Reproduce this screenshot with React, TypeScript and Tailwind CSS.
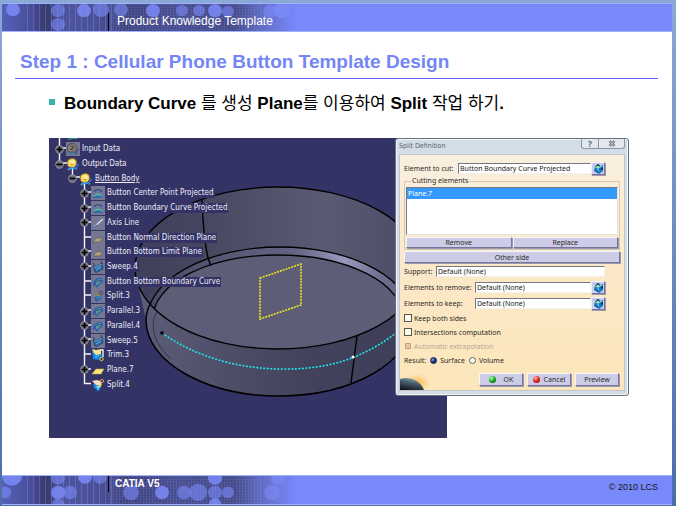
import React from 'react';
import clsx from 'clsx';

type IconKind = 'body' | 'project' | 'line' | 'plane' | 'sweep' | 'split' | 'parallel' | 'trim' | 'planeOn' | 'splitOn';

interface TreeNode {
  label: string;
  icon: IconKind;
  level: 0 | 1 | 2;
  toggle?: 'plus' | 'minus';
  hidden?: boolean;
  active?: boolean;
}

const nodes: TreeNode[] = [
  { label: 'Input Data', icon: 'body', level: 0, toggle: 'plus', hidden: true },
  { label: 'Output Data', icon: 'body', level: 0, toggle: 'minus' },
  { label: 'Button Body', icon: 'body', level: 1, toggle: 'minus', active: true },
  { label: 'Button Center Point Projected', icon: 'project', level: 2, toggle: 'plus', hidden: true },
  { label: 'Button Boundary Curve Projected', icon: 'project', level: 2, toggle: 'plus', hidden: true },
  { label: 'Axis Line', icon: 'line', level: 2, toggle: 'plus', hidden: true },
  { label: 'Button Normal Direction Plane', icon: 'plane', level: 2, hidden: true },
  { label: 'Button Bottom Limit Plane', icon: 'plane', level: 2, toggle: 'plus', hidden: true },
  { label: 'Sweep.4', icon: 'sweep', level: 2, toggle: 'plus', hidden: true },
  { label: 'Button Bottom Boundary Curve', icon: 'parallel', level: 2, hidden: true },
  { label: 'Split.3', icon: 'split', level: 2, hidden: true },
  { label: 'Parallel.3', icon: 'parallel', level: 2, toggle: 'plus', hidden: true },
  { label: 'Parallel.4', icon: 'parallel', level: 2, toggle: 'plus', hidden: true },
  { label: 'Sweep.5', icon: 'sweep', level: 2, toggle: 'plus', hidden: true },
  { label: 'Trim.3', icon: 'trim', level: 2 },
  { label: 'Plane.7', icon: 'planeOn', level: 2, toggle: 'plus' },
  { label: 'Split.4', icon: 'splitOn', level: 2 },
];

const headerDots = [
  [11, 6, 7], [56, 7, 7], [56, 22, 7], [82, 7, 7], [99, 6, 8], [119, 6, 7], [151, 7, 7], [180, 7, 6],
  [197, 7, 6], [213, 7, 7], [226, 8, 6], [268, 8, 7], [280, 7, 8],
];

const footerDots = [
  [10, 0, 10], [3, 17, 6], [56, 2, 7], [56, 17, 7], [68, 17, 7], [56, 29, 6], [83, 1, 7], [98, 1, 7],
  [129, 17, 8], [160, 17, 7], [182, 17, 7], [196, 17, 9], [213, 2, 7], [213, 17, 7], [226, 17, 6], [213, 29, 6],
  [276, 2, 7], [270, 17, 8],
];

const Pattern = ({ id, dots }: { id: string; dots: number[][] }) => (
  <svg className="absolute inset-y-0 left-0 h-full w-[310px]" viewBox="0 0 310 29" preserveAspectRatio="none" aria-hidden="true">
    <defs>
      <linearGradient id={`${id}-fade`}>
        <stop offset="0" stopColor="#5560b8" />
        <stop offset="0.1" stopColor="#474c94" />
        <stop offset="0.14" stopColor="#363968" />
        <stop offset="0.2" stopColor="#4d549c" />
        <stop offset="0.3" stopColor="#4b5196" />
        <stop offset="0.4" stopColor="#3c4076" />
        <stop offset="0.56" stopColor="#454a88" />
        <stop offset="0.75" stopColor="#424780" />
        <stop offset="0.85" stopColor="#6470ca" />
        <stop offset="0.95" stopColor="#7889fb" />
      </linearGradient>
      <pattern id={`${id}-grid`} width="3" height="3" patternUnits="userSpaceOnUse">
        <path d="M0 .5H3M.5 0V3" stroke="#8594ff" strokeWidth="1" opacity="0.22" />
      </pattern>
      <pattern id={`${id}-bars`} width="6" height="29" patternUnits="userSpaceOnUse">
        <path d="M1.500 0V29" stroke="#8594ff" strokeWidth="1" opacity="0.35" />
      </pattern>
    </defs>
    <rect width="310" height="29" fill={`url(#${id}-fade)`} />
    <rect x="20" width="90" height="29" fill={`url(#${id}-bars)`} />
    <rect x="106" width="154" height="29" fill={`url(#${id}-grid)`} />
    {dots.map(([cx, cy, r], i) => (
      <circle key={i} cx={cx} cy={cy} r={r} fill="#7b8bf8" opacity={i % 3 === 0 ? 0.85 : 0.6} />
    ))}
  </svg>
);

const NodeIcon = ({ kind, hidden }: { kind: IconKind; hidden?: boolean }) => (
  <svg className="size-[14px] shrink-0" viewBox="0 0 14 14" aria-hidden="true">
    {hidden && <rect width="14" height="14" fill="#787792" />}
    {kind === 'body' && (
      <g>
        <path d="M2 13c3-3 7-2 9-1" stroke={hidden ? '#4a7fa8' : '#35a5f0'} strokeWidth="1.8" fill="none" />
        <path d="M9 12l3.500-5" stroke={hidden ? '#3a558c' : '#2c6fe0'} strokeWidth="1.400" />
        <path d="M2 3.500C4 1 9 1 10 3.500c1 3 0 5.500-2 6.500H3C1 8 1 5.500 2 3.500z" fill={hidden ? '#8c8570' : '#f6dc5c'} stroke={hidden ? '#3c3a50' : '#a8802c'} strokeWidth="0.8" />
        <path d="M4 5c1-2 4-1 4 0s-2 2-2 3M4 8l4-4" stroke={hidden ? '#3c3a50' : '#fffbe0'} strokeWidth="0.9" fill="none" />
        <path d="M4.500 7.500h3" stroke={hidden ? '#3c3a50' : '#c4632c'} strokeWidth="0.8" />
      </g>
    )}
    {kind === 'project' && (
      <g fill="none">
        <path d="M3 6c1-3 7-3 8 0" stroke="#29408f" strokeWidth="1.2" />
        <path d="M2 12l2-3h6l2 3z" fill="#3467b8" />
        <path d="M3 10c2-2 6-2 8 0" stroke="#4cc39a" strokeWidth="1.3" />
        <path d="M4 5v4M10 5v4" stroke="#3b7fc4" strokeWidth="0.8" />
      </g>
    )}
    {kind === 'line' && <path d="M3 11L12 3" stroke="#d5e8ee" strokeWidth="1.2" />}
    {kind === 'line' && <path d="M2.500 12L6 9" stroke="#3577b4" strokeWidth="1.2" />}
    {kind === 'plane' && <path d="M2 11l3-4h7l-3 4z" fill="#b0a578" stroke="#5c5870" strokeWidth="0.7" />}
    {kind === 'planeOn' && <path d="M1 11l4-5h8l-3 5z" fill="#f4e57a" stroke="#c8b040" strokeWidth="0.5" />}
    {kind === 'sweep' && (
      <g>
        <path d="M2 6c3 2 5-1 9-3l1 6c-3 1-5 4-8 3z" fill="#2a6ba8" stroke="#25335f" strokeWidth="0.7" />
        <path d="M3 7c3 1 5-2 8-3M5 10l5-3" stroke="#68b9da" strokeWidth="0.9" fill="none" />
        <path d="M2 3l2 3M10 1l1 3" stroke="#27305e" />
      </g>
    )}
    {kind === 'parallel' && (
      <g>
        <path d="M2 8c1-4 5-6 9-5l1 5c-3 0-4 2-6 5z" fill="#2a62b4" />
        <path d="M4 7c2-3 4-3 6-3l1 3c-3 0-4 2-5 4z" fill="#5a9a86" />
        <path d="M2 11c2-5 5-6 10-5" stroke="#2d3f98" fill="none" />
      </g>
    )}
    {kind === 'split' && (
      <g>
        <path d="M3 8c2 1 4-2 8-2l-1 5c-2-1-3 2-5 2z" fill="#2967ab" />
        <path d="M3 3l5 2 4-2-2 4H5z" fill="#8a8468" />
        <circle cx="10" cy="4" r="1.600" fill="none" stroke="#3e3c52" strokeWidth="0.8" />
        <path d="M6 9c2 0 3-1 4-2" stroke="#5bb6cf" fill="none" />
      </g>
    )}
    {kind === 'trim' && (
      <g>
        <path d="M1 2l3 2 5-2 2 6-4 4-5-1z" fill="#1a86e8" />
        <path d="M1 1l4 1 5-1v5L5 7 3 5z" fill="#f6e88a" />
        <path d="M10 2h2v7" stroke="#fff" strokeWidth="1.300" fill="none" />
        <circle cx="10.500" cy="11" r="1.700" fill="#25336a" stroke="#f0d24a" />
        <path d="M4 9c2 0 3-1 4-2" stroke="#56e0f0" fill="none" />
      </g>
    )}
    {kind === 'splitOn' && (
      <g>
        <path d="M2 6c3 1 5-1 9 0l-3 7c-2 0-3-2-5-3z" fill="#1b82e6" />
        <path d="M1 3l5-1 6 2-3 3H5z" fill="#f5dfc0" />
        <path d="M5 8h4l-2 4z" fill="#66e2ee" />
        <path d="M7 7l4-1-2 4z" fill="#f2e14e" />
        <circle cx="11" cy="3" r="1.600" fill="#25336a" stroke="#e8a23c" />
      </g>
    )}
  </svg>
);

const levelIndent = { 0: 'pl-[6px]', 1: 'pl-[19px]', 2: 'pl-[31px]' };

const TreeRow = ({ node }: { node: TreeNode }) => (
  <li className={clsx('flex items-center', levelIndent[node.level])}>
    {node.toggle ? (
      <button type="button" aria-label={`Toggle ${node.label}`} className="size-[9px] shrink-0">
        <svg viewBox="0 0 9 9" className="block size-full">
          <circle cx="4.500" cy="4.500" r="4.200" fill="#9a9aa4" />
          <circle cx="4.500" cy="4.500" r="3.300" fill="#6a6a72" />
          <path d={node.toggle === 'plus' ? 'M1.500 4.500H7.500M4.500 1.500V7.500' : 'M1.500 4.500H7.500'} stroke="#000" strokeWidth="1.600" />
        </svg>
      </button>
    ) : (
      <span className="size-[9px] shrink-0" />
    )}
    <span className="ml-[2px] flex items-center gap-px">
      <NodeIcon kind={node.icon} hidden={node.hidden} />
      <span className={clsx('bg-[#333366] px-px text-[8px] leading-[10px] whitespace-nowrap text-[#eeeef6]', node.active && 'underline')}>
        {node.label}
      </span>
    </span>
  </li>
);

const Scene = () => (
  <svg className="absolute inset-0 size-full" viewBox="49 138 398 300" aria-hidden="true">
    <defs>
      <linearGradient id="wall" x1="135" x2="421" y1="0" y2="0" gradientUnits="userSpaceOnUse">
        <stop offset="0" stopColor="#403f59" />
        <stop offset="0.22" stopColor="#474660" />
        <stop offset="0.65" stopColor="#5b5a72" />
        <stop offset="1" stopColor="#4c4b66" />
      </linearGradient>
      <linearGradient id="ledge" x1="147" x2="413" y1="0" y2="0" gradientUnits="userSpaceOnUse">
        <stop offset="0" stopColor="#4b4a66" />
        <stop offset="0.55" stopColor="#636280" />
        <stop offset="0.74" stopColor="#9a98bd" />
        <stop offset="0.9" stopColor="#6a6988" />
      </linearGradient>
      <linearGradient id="shell" x1="135" x2="421" y1="0" y2="0" gradientUnits="userSpaceOnUse">
        <stop offset="0" stopColor="#5f5e79" />
        <stop offset="0.3" stopColor="#504f69" />
        <stop offset="0.6" stopColor="#43425c" />
        <stop offset="1" stopColor="#3f3e58" />
      </linearGradient>
      <clipPath id="opening">
        <ellipse cx="278" cy="268" rx="143" ry="81" />
      </clipPath>
    </defs>
    <rect x="49" y="138" width="398" height="300" fill="#333366" />
    <path d="M137 280L146 320C147 362 206 396 279 396S412 362 412 320L420 280Z" fill="url(#shell)" />
    <path d="M151 302C148 308 146 314 146 320C146 362 206 396 279 396S412 362 412 320" fill="none" stroke="#000" strokeWidth="1.500" />
    <path d="M157 311C150 324 152 342 171 359" fill="none" stroke="#34334a" />
    <ellipse cx="278" cy="268" rx="143" ry="81" fill="url(#wall)" />
    <g clipPath="url(#opening)" stroke="#000" strokeWidth="1.300">
      <ellipse cx="280" cy="320" rx="133" ry="73" fill="url(#ledge)" />
      <ellipse cx="278" cy="318" rx="125" ry="63" fill="#5e5d78" />
    </g>
    <ellipse cx="278" cy="268" rx="143" ry="81" fill="none" stroke="#000" strokeWidth="1.400" />
    <path d="M202 200C203 225 205 245 208 258L211 266M357 336L351 383" fill="none" stroke="#000" strokeWidth="1.400" />
    <path d="M162 333C190 353 230 368 278 369S360 360 396 333" fill="none" stroke="#1fe6ee" strokeWidth="1.600" strokeDasharray="2 1.500" />
    <circle cx="162" cy="333" r="1.800" />
    <circle cx="353" cy="357" r="1.500" fill="#fff" />
    <path d="M260 278L301 264V305L260 319Z" fill="none" stroke="#f2ee1e" strokeWidth="1.500" strokeDasharray="2 1" />
    {/* branches of the specification tree */}
    <g stroke="#f4f4fa" strokeWidth="1.400" fill="none">
      <path d="M59.500 138V163H67M59.500 148H67M72.500 168V177H80M84.500 182V383.500H91" />
      <path d="M84.500 192H91M84.500 207H91M84.500 222H91M84.500 237H91M84.500 251H91M84.500 266H91M84.500 281H91M84.500 295H91M84.500 310H91M84.500 325H91M84.500 339H91M84.500 354H91M84.500 369H91" />
    </g>
    <path d="M68 139.500l6-1.500 3 1" stroke="#38b89a" fill="none" />
  </svg>
);

const raised = 'border border-t-[#f4f4ff] border-l-[#f4f4ff] border-r-[#77769a] border-b-[#77769a] bg-[#cdcce6] shadow-[1px_1px_0_#9a99b4]';
const sunken = 'min-w-0 border border-t-[#77777f] border-l-[#77777f] border-r-[#f6f2ea] border-b-[#f6f2ea] bg-white px-px text-[#222]';

const PickButton = ({ label }: { label: string }) => (
  <button type="button" aria-label={label} className={clsx('flex h-[13px] w-[14px] shrink-0 items-center justify-center', raised)}>
    <svg className="size-[11px]" viewBox="0 0 11 11">
      <path d="M2 3l3-2 2 2 3-1v6L6 11 1 8z" fill="#1878c8" />
      <path d="M2 4l3 1v4M5 5l4-2" stroke="#5ae0e8" strokeWidth="1.300" fill="none" />
      <path d="M4 1l3 1-2 2zM7 6l3-2v3z" fill="#18305e" />
      <path d="M4 3h2v2H4z" fill="#d8d840" />
      <path d="M2 7l3 1v2z" fill="#123a9a" />
    </svg>
  </button>
);

interface FieldProps {
  id: string;
  label: string;
  value: string;
  labelWidth: string;
  pick?: boolean;
}

const Field = ({ id, label, value, labelWidth, pick }: FieldProps) => (
  <div className="flex h-[15px] items-center pr-[15px]">
    <label htmlFor={id} className={clsx('shrink-0 whitespace-nowrap', labelWidth)}>{label}</label>
    <input id={id} type="text" defaultValue={value} className={clsx('h-[11px] flex-1', sunken)} />
    {pick && <PickButton label={`Pick ${label}`} />}
  </div>
);

const Check = ({ label, disabled }: { label: string; disabled?: boolean }) => (
  <label className={clsx('flex h-[14px] items-center gap-[2px]', disabled && 'text-[#b5aa98]')}>
    <input
      type="checkbox"
      disabled={disabled}
      defaultChecked={disabled}
      className={clsx('appearance-none border', disabled ? 'mx-px size-[6px] border-[#c8a080] bg-[#e8c8a4]' : 'size-2 border-[#55554c] bg-[#fdfbea]')}
    />
    {label}
  </label>
);

const Radio = ({ label, checked }: { label: string; checked?: boolean }) => (
  <label className="flex items-center gap-[3px]">
    <input
      type="radio"
      name="result"
      defaultChecked={checked}
      className="size-[7px] appearance-none rounded-full border border-[#66665e] bg-[#fffdf0] checked:border-[#101c4c] checked:bg-[radial-gradient(circle_at_30%_30%,#7a9ae8_10%,#12266c_55%)]"
    />
    {label}
  </label>
);

const Led = ({ color }: { color: 'green' | 'red' }) => (
  <span
    className={clsx(
      'size-[7px] rounded-full',
      color === 'green'
        ? 'bg-[radial-gradient(circle_at_35%_30%,#b8ffb0,#18a428_50%,#06560e)]'
        : 'bg-[radial-gradient(circle_at_35%_30%,#ffc0b8,#e02418_50%,#780a06)]',
    )}
  />
);

const SplitDialog = () => (
  <section
    role="dialog"
    aria-label="Split Definition"
    className="absolute top-0 left-[346px] flex w-[234px] flex-col rounded-[3px] border border-[#66727c] bg-[#d3dde8] px-[3px] pb-1 font-['Noto_Sans',sans-serif] text-[7px] leading-[9px] text-[#2c2a28] shadow-[inset_0_0_0_1px_#f2f6fa]"
  >
    <header className="flex h-[15px] items-start justify-between">
      <h2 className="pt-[2px] font-['DejaVu_Sans_Condensed','DejaVu_Sans',sans-serif] text-[7px] leading-[10px] text-[#5a5f66]">Split Definition</h2>
      <div className="flex h-[10px] overflow-hidden rounded-b-[3px] border border-t-0 border-[#8d969f] bg-[#e2e8ee] text-[#555b62]">
        <button type="button" aria-label="Help" className="flex w-[17px] items-center justify-center border-r border-[#8d969f] text-[8px] leading-[9px] font-bold">?</button>
        <button type="button" aria-label="Close" className="flex w-[25px] items-center justify-center">
          <svg className="h-[7px] w-2" viewBox="0 0 8 7">
            <path d="M1.500 1L6.500 6M6.500 1L1.500 6" stroke="#555b62" strokeWidth="2.400" />
            <path d="M1.500 1L6.500 6M6.500 1L1.500 6" stroke="#eef2f6" strokeWidth="0.900" />
          </svg>
        </button>
      </div>
    </header>

    <form className="relative flex flex-col border border-[#c2c6ca] bg-gradient-to-b from-[#f9efe0] via-[#fbe8c8] to-[#fce6b9] px-1 pt-[6px] pb-1" onSubmit={(e) => e.preventDefault()}>
      <Field id="cut" label="Element to cut:" value="Button Boundary Curve Projected" labelWidth="w-[54px]" pick />

      <fieldset className="border border-[#d5c9b2] p-px">
        <legend className="ml-[5px] px-px leading-[10px]">Cutting elements</legend>
        <ul role="listbox" aria-label="Cutting elements" className="h-[48px] border border-t-[#77777f] border-l-[#77777f] border-r-[#e8e4da] border-b-[#e8e4da] bg-white">
          <li role="option" aria-selected="true" className="h-[11px] bg-[#3399ff] px-px leading-[11px] text-white">Plane.7</li>
        </ul>
        <div className="mt-[2px] grid grid-cols-2 gap-px">
          <button type="button" className={clsx('h-[11px]', raised)}>Remove</button>
          <button type="button" className={clsx('h-[11px]', raised)}>Replace</button>
        </div>
      </fieldset>
      <button type="button" className={clsx('mt-px h-[12px]', raised)}>Other side</button>

      <div className="mt-px flex flex-col gap-px">
        <Field id="support" label="Support:" value="Default (None)" labelWidth="w-8" />
        <Field id="remove" label="Elements to remove:" value="Default (None)" labelWidth="w-[71px]" pick />
        <Field id="keep" label="Elements to keep:" value="Default (None)" labelWidth="w-[71px]" pick />
      </div>

      <Check label="Keep both sides" />
      <Check label="Intersections computation" />
      <Check label="Automatic extrapolation" disabled />
      <div className="flex h-[14px] items-center gap-[4px]">
        <span>Result:</span>
        <Radio label="Surface" checked />
        <Radio label="Volume" />
      </div>

      <svg className="absolute bottom-0 left-0 h-5 w-[30px]" viewBox="0 0 30 20" aria-hidden="true">
        <defs>
          <radialGradient id="glow" cx="0.550" cy="0.650" r="0.500">
            <stop offset="0" stopColor="#f9a82c" />
            <stop offset="1" stopColor="#fcd68a" stopOpacity="0" />
          </radialGradient>
          <linearGradient id="planet" x1="0.700" y1="0" x2="0.300" y2="1">
            <stop offset="0" stopColor="#8fb4cc" />
            <stop offset="0.400" stopColor="#4c6070" />
            <stop offset="1" stopColor="#15181c" />
          </linearGradient>
        </defs>
        <rect width="30" height="20" fill="url(#glow)" />
        <path d="M0 20V9c9-3 20 1 24 11z" fill="url(#planet)" />
      </svg>
      <div className="mt-[6px] flex justify-end gap-1 pr-px">
        <button type="button" className={clsx('flex h-[13px] w-11 items-center justify-center gap-2', raised)}><Led color="green" />OK</button>
        <button type="button" className={clsx('flex h-[13px] w-11 items-center justify-center gap-1', raised)}><Led color="red" />Cancel</button>
        <button type="button" className={clsx('h-[13px] w-11', raised)}>Preview</button>
      </div>
    </form>
  </section>
);

const App: React.FC = () => {
  return (
    <div className="flex min-h-screen flex-col bg-gradient-to-b from-[#8ba9d6] to-[#4c6ea6] pt-[3px] pr-1 pb-px pl-[2px] font-['Liberation_Sans','Noto_Sans_CJK_KR',sans-serif]">
      <header className="relative h-[29px] border-y border-[#a3b0fb] bg-[#7889fb]">
        <Pattern id="top" dots={headerDots} />
        <div className="relative ml-[106px] flex h-full items-end">
          <span className="h-[18px] w-px bg-black" />
          <p className="pb-[2px] pl-2 text-[12px] leading-4 text-white">Product Knowledge Template</p>
        </div>
      </header>

      <main className="flex-1 bg-white pr-[14px] pl-[13px]">
        <h1 className="border-b border-[#6a62f4] pt-[18px] pb-[4px] pl-[5px] text-[19px] leading-6 font-bold text-[#7486f5]">
          Step 1 : Cellular Phone Button Template Design
        </h1>
        <ul className="pt-[13px] pl-[34px]">
          <li className="flex items-center gap-[9px] text-[17px] leading-6 font-bold text-black">
            <span className="mb-1 size-[6px] bg-[#36b3b3]" />
            <p>
              Boundary Curve <span className="font-normal">를 생성</span> Plane<span className="font-normal">를 이용하여</span> Split
              <span className="font-normal"> 작업 하기</span>.
            </p>
          </li>
        </ul>

        <div className="relative mt-[22px] ml-[34px] h-[300px] w-[398px]">
          <Scene />
          <ul className="relative grid h-[254px] auto-rows-fr overflow-hidden pt-[4px] font-['DejaVu_Sans_Condensed','DejaVu_Sans',sans-serif]">
            {nodes.map((node) => (
              <TreeRow key={node.label} node={node} />
            ))}
          </ul>
          <SplitDialog />
        </div>
      </main>

      <footer className="relative h-[30px] border-y border-[#a3b0fb] bg-[#7889fb]">
        <Pattern id="bottom" dots={footerDots} />
        <div className="relative flex h-full items-start justify-between pr-[14px] pl-[106px]">
          <div className="flex">
            <span className="h-[16px] w-px bg-black" />
            <p className="pl-[6px] text-[10px] leading-4 font-bold text-white">CATIA V5</p>
          </div>
          <small className="pt-1 text-[9px] leading-[14px] text-[#151515]">© 2010 LCS</small>
        </div>
      </footer>
    </div>
  );
};

export default App;
